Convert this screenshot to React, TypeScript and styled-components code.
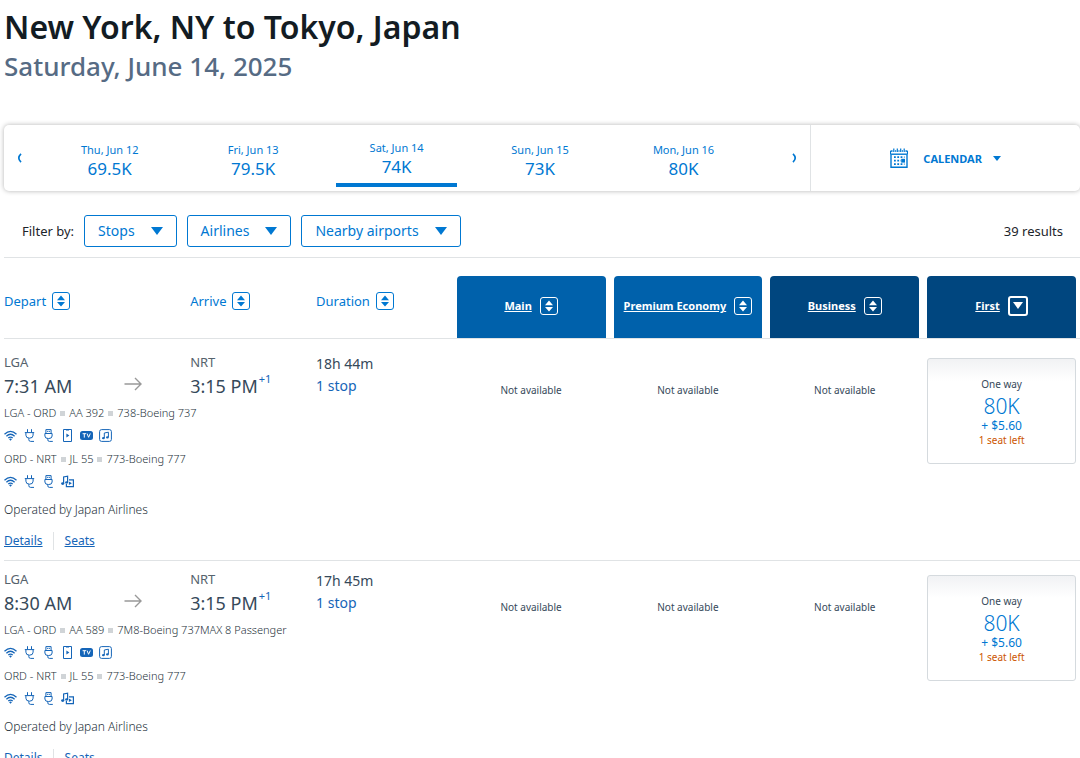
import React from "react";
import styled, { createGlobalStyle, css } from "styled-components";

const color = {
  link: "#0078d2",
  deepLink: "#1565b8",
  cabin: "#0061ab",
  premiumCabin: "#00467f",
  text: "#36495a",
  muted: "#56636d",
  line: "#e0e3e5",
  alert: "#cc5500",
};

const GlobalStyle = createGlobalStyle`
  * { box-sizing: border-box; }
  body {
    margin: 0;
    background: #fff;
    color: ${color.text};
    font-family: "Noto Sans", "Open Sans", sans-serif;
    font-size: 14px;
  }
  button { font: inherit; color: inherit; background: none; border: 0; padding: 0; cursor: pointer; }
  h1, p, ul { margin: 0; padding: 0; }
  ul { list-style: none; }
  svg { display: block; flex: none; }
`;

const Page = styled.main`
  padding: 7px 0 0 4px;
`;

const Title = styled.h1`
  font-size: 32px;
  line-height: 40px;
  font-weight: 600;
  color: #131c23;
`;

const TripDate = styled.p`
  font-size: 26px;
  line-height: 38px;
  font-weight: 500;
  color: #566b84;
`;

const Strip = styled.section`
  display: flex;
  margin-top: 40px;
  min-height: 66px;
  border-radius: 5px;
  box-shadow: 0 0 5px rgba(0, 0, 0, 0.3);
  color: ${color.link};
`;

const Week = styled.div`
  flex: 3;
  display: flex;
`;

const PageButton = styled.button<{ $next?: boolean }>`
  flex: none;
  display: flex;
  align-items: center;
  width: ${(p) => (p.$next ? 55 : 34)}px;
  justify-content: ${(p) => (p.$next ? "flex-end" : "flex-start")};
  padding: 0 12px;
`;

const Days = styled.ul`
  flex: 1;
  display: grid;
  grid-template-columns: repeat(5, 1fr);
`;

const Day = styled.button<{ $current?: boolean }>`
  display: block;
  width: calc(100% - 22px);
  margin: 0 11px;
  padding: 17px 0 5px;
  ${(p) =>
    p.$current &&
    css`
      padding-top: 15px;
      border-bottom: 4px solid ${color.link};
    `}
`;

const DayName = styled.span`
  display: block;
  font-size: 11px;
  line-height: 16px;
`;

const DayPrice = styled.span`
  display: block;
  font-size: 17px;
  line-height: 22px;
`;

const CalendarButton = styled.button`
  flex: 1;
  display: flex;
  align-items: center;
  justify-content: center;
  border-left: 1px solid ${color.line};
  font-size: 11px;
  font-weight: 700;
`;

const CalendarLabel = styled.span`
  margin: 0 11px 0 15px;
`;

const Filters = styled.div`
  display: flex;
  align-items: center;
  gap: 10px;
  padding: 24px 17px 10px 18px;
  border-bottom: 1px solid ${color.line};
  font-size: 13px;
  color: #1c242b;
`;

const FilterButton = styled.button`
  display: flex;
  align-items: center;
  gap: 16px;
  height: 32px;
  padding: 0 13px;
  border: 1px solid ${color.link};
  border-radius: 3px;
  font-size: 14px;
  line-height: 20px;
  color: ${color.link};
`;

const Results = styled.span`
  margin-left: auto;
`;

const Flights = styled.table`
  width: 100%;
  table-layout: fixed;
  border-collapse: separate;
  border-spacing: 0;
`;

const Col = styled.col<{ $w?: string }>`
  width: ${(p) => p.$w ?? "auto"};
`;

const HeadCell = styled.th`
  padding: 18px 0 0;
  border-bottom: 1px solid ${color.line};
  text-align: left;
  font-weight: 400;
`;

const CabinHeadCell = styled(HeadCell)`
  padding: 18px 4px 0;
`;

const SortButton = styled.button`
  display: flex;
  align-items: center;
  gap: 6px;
  margin-bottom: 12px;
  font-size: 13px;
  color: ${color.link};
`;

const CabinHead = styled.div<{ $premium?: boolean }>`
  display: flex;
  align-items: center;
  justify-content: center;
  height: 62px;
  padding-bottom: 3px;
  border-radius: 4px 4px 0 0;
  background: ${(p) => (p.$premium ? color.premiumCabin : color.cabin)};
  color: #fff;
`;

const CabinSort = styled.button`
  display: flex;
  align-items: center;
  gap: 8px;
  font-size: 11px;
  font-weight: 700;
`;

const CabinName = styled.span`
  text-decoration: underline;
`;

const SortBox = styled.span<{ $active?: boolean }>`
  display: flex;
  align-items: center;
  justify-content: center;
  width: ${(p) => (p.$active ? 20 : 18)}px;
  height: ${(p) => (p.$active ? 20 : 18)}px;
  border: ${(p) => (p.$active ? 2 : 1)}px solid currentColor;
  border-radius: 3px;
`;

const FlightGroup = styled.tbody`
  &:first-of-type > tr:first-child > td {
    border-top: 5px solid transparent;
  }
`;

const TimeCell = styled.td`
  padding: 9px 0 7px;
  vertical-align: top;
`;

const Airport = styled.div`
  font-size: 13px;
  line-height: 18px;
  color: ${color.muted};
`;

const TimeLine = styled.div`
  display: flex;
  align-items: flex-start;
  margin-top: 3px;
  font-size: 18px;
  line-height: 24px;
  white-space: nowrap;
`;

const Departure = styled(TimeLine)`
  justify-content: space-between;
  padding-right: 48px;

  svg {
    margin-top: 3px;
  }
`;

const DayShift = styled.sup`
  margin-left: 1px;
  font-size: 11px;
  line-height: 10px;
  color: ${color.deepLink};
`;

const LegCell = styled.td`
  padding: 9px 0 0;
  border-bottom: 1px solid ${color.line};
  vertical-align: top;
  font-size: 14px;
  line-height: 22px;
`;

const StopsButton = styled.button`
  display: block;
  color: ${color.deepLink};
`;

const DetailCell = styled.td`
  padding: 0 0 10px;
  border-bottom: 1px solid ${color.line};
  vertical-align: top;
`;

const Segment = styled.div`
  display: flex;
  align-items: center;
  gap: 4px;
  font-size: 11px;
  font-weight: 300;
  line-height: 16px;
  color: #26323b;
  white-space: nowrap;
`;

const Dot = styled.span`
  width: 5px;
  height: 5px;
  background: #d0d4d7;
`;

const Amenities = styled.div`
  display: flex;
  gap: 6px;
  margin: 8px 0 9px;
  color: ${color.deepLink};
`;

const Operator = styled.p`
  margin-top: 13px;
  font-size: 12px;
  font-weight: 300;
  line-height: 18px;
  color: #26323b;
`;

const Links = styled.div`
  display: flex;
  margin-top: 13px;
  font-size: 12px;
  line-height: 18px;
`;

const TextLink = styled.a`
  color: ${color.deepLink};
  & + & {
    margin-left: 10px;
    padding-left: 11px;
    border-left: 1px solid ${color.line};
  }
`;

const FareCell = styled.td`
  padding: 14px 4px 0;
  border-bottom: 1px solid ${color.line};
  vertical-align: top;
  text-align: center;
`;

const NotAvailable = styled.p`
  padding-top: 24px;
  font-size: 10px;
  line-height: 16px;
`;

const Fare = styled.button`
  display: block;
  width: 100%;
  padding: 18px 0 17px;
  border: 1px solid #d5dade;
  border-radius: 3px;
  background: linear-gradient(#f1f2f4, #fff 22px);
  font-size: 10px;
  line-height: 14px;
`;

const FareLine = styled.span`
  display: block;
`;

const Miles = styled(FareLine)`
  margin-top: 3px;
  font-size: 21px;
  line-height: 24px;
  font-weight: 300;
  color: ${color.link};
`;

const Taxes = styled(FareLine)`
  font-size: 12px;
  line-height: 16px;
  color: ${color.link};
`;

const SeatsLeft = styled(FareLine)`
  line-height: 12px;
  color: ${color.alert};
`;

const Chevron = ({ right }: { right?: boolean }) => (
  <svg width="6" height="10" viewBox="0 0 6 10" fill="none" stroke="currentColor" strokeWidth="1.7">
    <path d={right ? "M1 .8Q5.4 5 1 9.2" : "M5 .8Q.6 5 5 9.2"} />
  </svg>
);

const Down = ({ w, h }: { w: number; h: number }) => (
  <svg width={w} height={h} viewBox="0 0 12 8" preserveAspectRatio="none" fill="currentColor">
    <path d="M0 0H12L6 8Z" />
  </svg>
);

const UpDown = () => (
  <svg width="10" height="12" viewBox="0 0 10 12" fill="currentColor">
    <path d="M1 5.2L5 .4L9 5.2ZM1 6.9H9L5 11.6Z" />
  </svg>
);

const CalendarIcon = () => (
  <svg width="18" height="20" viewBox="0 0 18 20" fill="none" stroke="currentColor">
    <path d="M1 7V19.3H17V7" strokeWidth="1.4" />
    <path d="M.4 6.4V4.2Q.4 3 1.6 3H2.6M5 3H6.2M8.4 3H9.6M11.8 3H13M15.4 3H16.4Q17.6 3 17.6 4.2V6.4" strokeWidth="1.3" />
    <path d="M.4 6.2H17.6" strokeWidth="1.4" />
    <path d="M3.8 .5V4M7.3 .5V4M10.7 .5V4M14.2 .5V4" strokeWidth="1.2" />
    <path d="M4 9.2H14.5M4 12.7H11M4 16.2H14.5" strokeWidth="1.8" strokeDasharray="1.8 1.5" />
    <path d="M11.2 10.8H15V14.6H11.2Z" fill="currentColor" stroke="none" />
  </svg>
);

const ArrowIcon = () => (
  <svg width="18" height="14" viewBox="0 0 18 14" fill="none" stroke="#999" strokeWidth="1.4">
    <path d="M.5 7H17M11 1L17 7L11 13" />
  </svg>
);

type AmenityName = "wifi" | "plug" | "usb" | "phone" | "tv" | "music" | "media";

const amenityArt: Record<AmenityName, React.ReactNode> = {
  wifi: (
    <>
      <path d="M.5 5.2Q6.5 -.4 12.5 5.2M2.4 7.2Q6.5 3.4 10.6 7.2M4.3 9.1Q6.5 7.1 8.7 9.1" strokeWidth="1.3" />
      <path d="M5.1 10.2Q6.5 9 7.9 10.2L6.5 11.8Z" fill="currentColor" stroke="none" />
    </>
  ),
  plug: <path d="M4.5 .2V3.3M8.5 .2V3.3M1.8 3.6H11.2M2.9 3.6V6.2Q2.9 9.2 6.5 9.2T10.1 6.2V3.6M5.8 9.2V10.6Q5.8 12.4 7.6 12.4H11" />,
  usb: <path d="M3.9 4.4V.6H9.1V4.4M5.7 1.9V3M7.3 1.9V3M2.9 4.5H10.1V7Q10.1 9.6 6.5 9.6T2.9 7ZM5.8 9.6V10.8Q5.8 12.4 7.4 12.4H10.8" />,
  phone: (
    <>
      <path d="M2.5 .5H10.5V12.5H2.5ZM5 1H8" />
      <path d="M5.4 4.6L8.4 6.5L5.4 8.4Z" fill="currentColor" stroke="none" />
    </>
  ),
  tv: (
    <>
      <rect x="0" y="2" width="13" height="9" rx="2.5" fill="currentColor" stroke="none" />
      <path d="M2.6 4.7H6M4.3 4.7V8.6M7 4.5L8.6 8.3L10.3 4.5" stroke="#fff" />
    </>
  ),
  music: (
    <>
      <rect x=".6" y=".6" width="11.8" height="11.8" rx="2" />
      <path d="M5.3 9V4L9.4 3.2V8.2" />
      <ellipse cx="4.4" cy="9.2" rx="1.4" ry="1.1" fill="currentColor" stroke="none" />
      <ellipse cx="8.4" cy="8.4" rx="1.4" ry="1.1" fill="currentColor" stroke="none" />
    </>
  ),
  media: (
    <>
      <path d="M2.6 8.4V2L6.6 1.2V7.2M5.4 8.8V11.6H12.4V4.8H8" strokeWidth="1.2" />
      <ellipse cx="1.7" cy="8.6" rx="1.6" ry="1.3" fill="currentColor" stroke="none" />
      <ellipse cx="5.6" cy="7.4" rx="1.5" ry="1.2" fill="currentColor" stroke="none" />
      <path d="M7.9 6.4L10.9 8.2L7.9 10Z" fill="currentColor" stroke="none" />
    </>
  ),
};

const Amenity = ({ name }: { name: AmenityName }) => (
  <svg width="13" height="13" viewBox="0 0 13 13" fill="none" stroke="currentColor" strokeWidth="1" role="img" aria-label={name}>
    {amenityArt[name]}
  </svg>
);

const days = [
  { name: "Thu, Jun 12", price: "69.5K" },
  { name: "Fri, Jun 13", price: "79.5K" },
  { name: "Sat, Jun 14", price: "74K", current: true },
  { name: "Sun, Jun 15", price: "73K" },
  { name: "Mon, Jun 16", price: "80K" },
];

const cabins = [
  { name: "Main" },
  { name: "Premium Economy" },
  { name: "Business", premium: true },
  { name: "First", premium: true, active: true },
];

const domestic: AmenityName[] = ["wifi", "plug", "usb", "phone", "tv", "music"];
const longHaul: AmenityName[] = ["wifi", "plug", "usb", "media"];

const flights = [
  {
    depart: "7:31 AM",
    duration: "18h 44m",
    segments: [
      { parts: ["LGA - ORD", "AA 392", "738-Boeing 737"], amenities: domestic },
      { parts: ["ORD - NRT", "JL 55", "773-Boeing 777"], amenities: longHaul },
    ],
  },
  {
    depart: "8:30 AM",
    duration: "17h 45m",
    segments: [
      { parts: ["LGA - ORD", "AA 589", "7M8-Boeing 737MAX 8 Passenger"], amenities: domestic },
      { parts: ["ORD - NRT", "JL 55", "773-Boeing 777"], amenities: longHaul },
    ],
  },
];

const FlightRows = ({ flight }: { flight: (typeof flights)[number] }) => (
  <FlightGroup>
    <tr>
      <TimeCell>
        <Airport>LGA</Airport>
        <Departure>
          {flight.depart}
          <ArrowIcon />
        </Departure>
      </TimeCell>
      <TimeCell>
        <Airport>NRT</Airport>
        <TimeLine>
          3:15 PM<DayShift>+1</DayShift>
        </TimeLine>
      </TimeCell>
      <LegCell rowSpan={2}>
        {flight.duration}
        <StopsButton>1 stop</StopsButton>
      </LegCell>
      {cabins.map((cabin) => (
        <FareCell key={cabin.name} rowSpan={2}>
          {cabin.active ? (
            <Fare>
              <FareLine>One way</FareLine>
              <Miles>80K</Miles>
              <Taxes>+ $5.60</Taxes>
              <SeatsLeft>1 seat left</SeatsLeft>
            </Fare>
          ) : (
            <NotAvailable>Not available</NotAvailable>
          )}
        </FareCell>
      ))}
    </tr>
    <tr>
      <DetailCell colSpan={2}>
        {flight.segments.map((segment) => (
          <React.Fragment key={segment.parts[0]}>
            <Segment>
              {segment.parts.map((part, i) => (
                <React.Fragment key={part}>
                  {i > 0 && <Dot />}
                  <span>{part}</span>
                </React.Fragment>
              ))}
            </Segment>
            <Amenities>
              {segment.amenities.map((name) => (
                <Amenity key={name} name={name} />
              ))}
            </Amenities>
          </React.Fragment>
        ))}
        <Operator>Operated by Japan Airlines</Operator>
        <Links>
          <TextLink href="#details">Details</TextLink>
          <TextLink href="#seats">Seats</TextLink>
        </Links>
      </DetailCell>
    </tr>
  </FlightGroup>
);

export default function App() {
  return (
    <Page>
      <GlobalStyle />
      <Title>New York, NY to Tokyo, Japan</Title>
      <TripDate>Saturday, June 14, 2025</TripDate>

      <Strip>
        <Week>
          <PageButton aria-label="Previous days">
            <Chevron />
          </PageButton>
          <Days>
            {days.map((day) => (
              <li key={day.name}>
                <Day $current={day.current}>
                  <DayName>{day.name}</DayName>
                  <DayPrice>{day.price}</DayPrice>
                </Day>
              </li>
            ))}
          </Days>
          <PageButton $next aria-label="Next days">
            <Chevron right />
          </PageButton>
        </Week>
        <CalendarButton>
          <CalendarIcon />
          <CalendarLabel>CALENDAR</CalendarLabel>
          <Down w={8} h={5} />
        </CalendarButton>
      </Strip>

      <Filters>
        <span>Filter by:</span>
        {["Stops", "Airlines", "Nearby airports"].map((name) => (
          <FilterButton key={name} aria-haspopup="true">
            {name}
            <Down w={12} h={8} />
          </FilterButton>
        ))}
        <Results>39 results</Results>
      </Filters>

      <Flights>
        <colgroup>
          <Col $w="17.3%" />
          <Col $w="11.7%" />
          <Col $w="12.7%" />
          <Col />
          <Col />
          <Col />
          <Col />
        </colgroup>
        <thead>
          <tr>
            {["Depart", "Arrive", "Duration"].map((name) => (
              <HeadCell key={name} scope="col">
                <SortButton>
                  {name}
                  <SortBox>
                    <UpDown />
                  </SortBox>
                </SortButton>
              </HeadCell>
            ))}
            {cabins.map((cabin) => (
              <CabinHeadCell key={cabin.name} scope="col">
                <CabinHead $premium={cabin.premium}>
                  <CabinSort>
                    <CabinName>{cabin.name}</CabinName>
                    <SortBox $active={cabin.active}>{cabin.active ? <Down w={10} h={7} /> : <UpDown />}</SortBox>
                  </CabinSort>
                </CabinHead>
              </CabinHeadCell>
            ))}
          </tr>
        </thead>
        {flights.map((flight) => (
          <FlightRows key={flight.depart} flight={flight} />
        ))}
      </Flights>
    </Page>
  );
}
